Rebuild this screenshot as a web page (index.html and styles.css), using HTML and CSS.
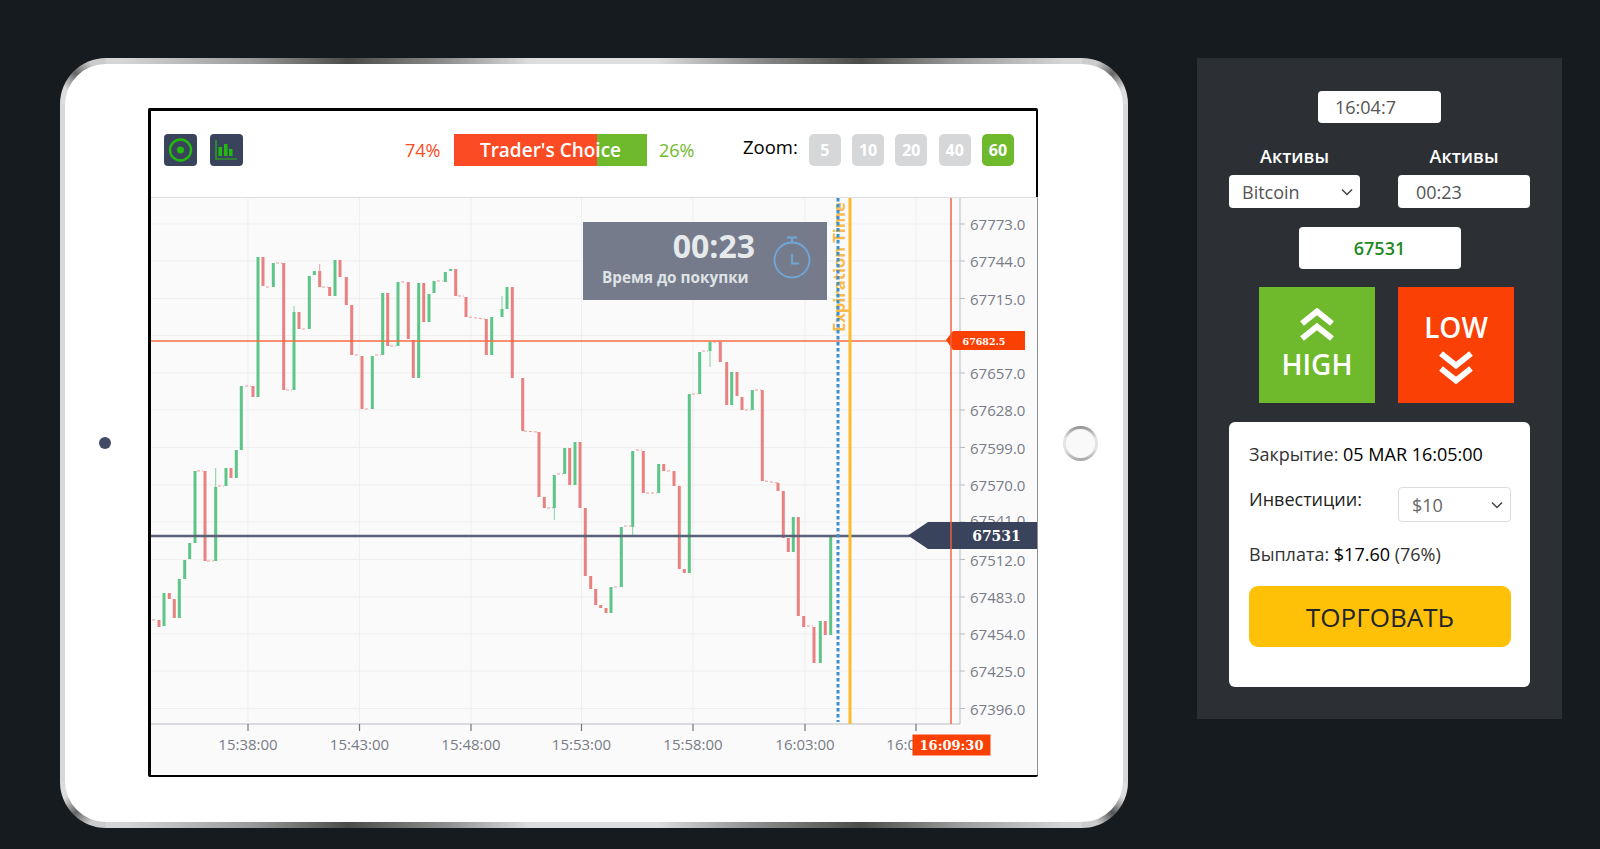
FILE: index.html
```html
<!DOCTYPE html>
<html>
  <head>
    <title>Trading terminal</title>
    <meta charset="utf-8" />
    <link rel="stylesheet" href="styles.css">
  </head>
  <body>
    <div class="page">
      <div class="tablet">
        <div class="tablet-face">
          <span class="camera"></span>
          <div class="screen">
            <div class="chart-header">
              <span class="tool-icon">
                <svg width="33" height="32" viewBox="0 0 33 32">
                  <circle class="icon-line" cx="16.5" cy="16" r="10.5" stroke-width="2.4" />
                  <circle class="icon-fill" cx="16.5" cy="16" r="3.5" />
                </svg>
              </span>
              <span class="tool-icon tool-icon-second">
                <svg width="33" height="32" viewBox="0 0 33 32">
                  <path class="icon-line" d="M6 6V25H27" stroke-width="1.2" />
                  <path class="icon-fill" d="M8.500 13h3.500v9h-3.500zM14 10h3.500v12h-3.500zM19 15h3.500v7h-3.500z" />
                </svg>
              </span>
              <span class="percent percent-down">74%</span>
              <div class="choice-bar">Trader's Choice</div>
              <span class="percent percent-up">26%</span>
              <span class="zoom-label">Zoom:</span>
              <div class="zoom-buttons">
                <button class="zoom-button">5</button>
                <button class="zoom-button">10</button>
                <button class="zoom-button">20</button>
                <button class="zoom-button">40</button>
                <button class="zoom-button active">60</button>
              </div>
            </div>
            <div class="chart">
              <svg class="chart-svg" width="886" height="577" viewBox="151 198 886 577">
                <path class="grid" d="M151 224H960M151 261H960M151 298.500H960M151 335.500H960M151 373H960M151 410H960M151 447.500H960M151 485H960M151 522H960M151 559.500H960M151 597H960M151 634H960M151 671H960M151 708.500H960" />
                <path class="grid" d="M248 198V724M359.500 198V724M471 198V724M581.500 198V724M693 198V724M805 198V724M916 198V724" />
                <path class="axis" d="M960 198V724H151" />
                <path class="axis" d="M960 224H965M960 261H965M960 298.500H965M960 335.500H965M960 373H965M960 410H965M960 447.500H965M960 485H965M960 522H965M960 559.500H965M960 597H965M960 634H965M960 671H965M960 708.500H965" />
                <path class="axis-tick" d="M248 724V731M359.500 724V731M471 724V731M581.500 724V731M693 724V731M805 724V731M916 724V731" />

                <g class="price-labels">
                  <text x="970" y="230">67773.0</text>
                  <text x="970" y="267">67744.0</text>
                  <text x="970" y="304.500">67715.0</text>
                  <text x="970" y="341.500">67686.0</text>
                  <text x="970" y="379">67657.0</text>
                  <text x="970" y="416">67628.0</text>
                  <text x="970" y="453.500">67599.0</text>
                  <text x="970" y="491">67570.0</text>
                  <text x="970" y="526">67541.0</text>
                  <text x="970" y="565.500">67512.0</text>
                  <text x="970" y="603">67483.0</text>
                  <text x="970" y="640">67454.0</text>
                  <text x="970" y="677">67425.0</text>
                  <text x="970" y="714.500">67396.0</text>
                </g>
                <g class="time-labels">
                  <text x="248" y="750">15:38:00</text>
                  <text x="359.500" y="750">15:43:00</text>
                  <text x="471" y="750">15:48:00</text>
                  <text x="581.500" y="750">15:53:00</text>
                  <text x="693" y="750">15:58:00</text>
                  <text x="805" y="750">16:03:00</text>
                  <text x="916" y="750">16:08:00</text>
                </g>

                <!-- candles -->
                <path class="doji-red" d="M152 620H156M197 471H203M207 561H214M218 486H224M245 386H251M266 287H271M276 263H282M286 390H292M302 329H307M322 287H328M355 355H360M365 409H370M375 355H381M390 346H396M401 282H406M437 281H443M458 296H464M469 317L485 319M524 431L537 432M547 508H553M557 474H563M614 587H619.500M624 526H631M636 450H642M646 493H657M667 471H672M692 394H698M702 351H708M713 342H719M745 410H751M755 390H761M765 481L778 483M807 626H813" />
                <path class="wick-green" d="M215.700 468V487M294 306V312M502 296V309M554.300 508V520M632.700 527V536M710 351V367" />
                <path class="wick-red" d="M319.700 264V271" />
                <path class="body-green" d="M164 593V626M179.300 579V618M184.700 560V579M189.700 543V559M195 471V543M215.700 487V561M226 468V486M236.300 450V478M241.300 386V450M258 257V397M273.300 263V287M294 312V390M309.300 276V329M314.300 271V275M335 260V296M372.300 356V409M382.700 293V355M398 282V346M418.700 283V378M429 294V322M434 281V293M445.300 272V282M450.700 269V271M491.700 317V355M502 309V317M507 287V309M554.300 475V508M564.700 448V474M575 442V485M611 587V613M621.300 527V587M632.700 451V527M658.700 464V493M689.300 394V573M699.700 352V394M710 342V351M731.700 372V405M752.300 390V410M793.300 517V552M820.300 621V663M830.700 536V635" />
                <path class="body-red" d="M159 620V627M169.300 593V599M174.300 599V618M205 471V561M231 468V478M253 386V397M263 257V286M283.700 263V390M299 312V329M319.700 271V287M329.700 287V296M340 260V277M346.300 277V305M351.700 305V355M362 356V409M387.700 293V346M408.300 282V339M413.300 340V378M423.700 283V322M455.700 269V296M466 297V317M486.300 319V355M512.300 287V378M522.700 378V431M539 432V497M544.300 497V508M569.700 448V485M580 442V508M585.300 508V576M590.700 576V589M595.700 589V605M600.700 605V608M606 608V613M643.300 451V493M663.700 464V471M674 471V486M679.300 486V569M684.300 569V573M720.300 342V362M726.700 362V405M737 372V396M742 397V410M762.300 390V481M778 483V491M783.300 491V538M788.300 538V552M798.300 517V616M803.700 616V627M814 627V663M825.300 621V635" />

                <path class="line-open" d="M151 341H947" />
                <path class="line-price" d="M151 536H910" />
                <text class="expiry-text" transform="translate(845 332) rotate(-90)">Expiration Time</text>
                <path class="line-buy" d="M838 198V722" />
                <path class="line-expiry" d="M850 198V724" />

                <polygon class="tag-open" points="946,340 953,331 1025,331 1025,350 953,350" />
                <text class="tag-text tag-open-text" x="984" y="344.500">67682.5</text>
                <polygon class="tag-price" points="908,535.500 928,522 1037,522 1037,549 928,549" />
                <text class="tag-text tag-price-text" x="996.500" y="541">67531</text>
                <path class="line-close" d="M951 198V724" />
                <rect class="tag-time" x="912.500" y="734.500" width="78" height="21" />
                <text class="tag-text tag-time-text" x="951.500" y="749.500">16:09:30</text>
              </svg>

              <div class="timer">
                <div class="timer-text">
                  <div class="timer-value">00:23</div>
                  <div class="timer-label">Время до покупки</div>
                </div>
                <svg class="timer-icon" width="40" height="46" viewBox="0 0 40 46">
                  <circle cx="20" cy="26" r="17.500" />
                  <path d="M15 3.500H25M20 3.500V8.500M20 20V29.500H27" />
                </svg>
              </div>
            </div>
          </div>
          <span class="home-button"></span>
        </div>
      </div>

      <aside class="panel">
        <input class="field time-field" type="text" value="16:04:7" />
        <div class="field-row">
          <div class="field-col">
            <label class="field-label">Активы</label>
            <select class="field asset-select">
              <option>Bitcoin</option>
            </select>
          </div>
          <div class="field-col">
            <label class="field-label">Активы</label>
            <input class="field expiry-field" type="text" value="00:23" />
          </div>
        </div>
        <div class="field rate-field">67531</div>
        <div class="trade-buttons">
          <button class="trade-button high">
            <svg width="36" height="34" viewBox="0 0 36 34">
              <path d="M3 15.500L18 3.500L33 15.500M3 30.500L18 18.500L33 30.500" />
            </svg>
            <span>HIGH</span>
          </button>
          <button class="trade-button low">
            <span>LOW</span>
            <svg width="36" height="34" viewBox="0 0 36 34">
              <path d="M3 3.500L18 15.500L33 3.500M3 18.500L18 30.500L33 18.500" />
            </svg>
          </button>
        </div>
        <div class="order-card">
          <div class="order-line">Закрытие: <b>05 MAR 16:05:00</b></div>
          <div class="order-line order-invest">
            <span>Инвестиции:</span>
            <select class="invest-select">
              <option>$10</option>
            </select>
          </div>
          <div class="order-line order-payout">Выплата: <b>$17.60</b> (76%)</div>
          <button class="submit-button">ТОРГОВАТЬ</button>
        </div>
      </aside>
    </div>
  </body>
</html>
```

FILE: styles.css
```css
* {
  box-sizing: border-box;
}

body {
  margin: 0;
  background-color: #161b20;
  font-family: "Open Sans", Arial, sans-serif;
  overflow: hidden;
}

.page {
  display: flex;
  align-items: flex-start;
  padding: 58px 0 0 60px;
  height: 849px;
}

/* tablet frame */
.tablet {
  width: 1068px;
  height: 770px;
  padding: 6px 5px;
  border-radius: 46px;
  background:
    linear-gradient(45deg, #ddd 22%, #666 50%, #ccc 78%) 0 0 / 46px 46px no-repeat,
    linear-gradient(135deg, #ccc 22%, #666 50%, #ddd 78%) 100% 0 / 46px 46px no-repeat,
    linear-gradient(135deg, #ddd 22%, #666 50%, #ccc 78%) 0 100% / 46px 46px no-repeat,
    linear-gradient(45deg, #ccc 22%, #555 50%, #ddd 78%) 100% 100% / 46px 46px no-repeat,
    linear-gradient(90deg, #d8d8d8 0, #d5d5d5 6%, #9a9a9a 18%, #4a4a48 27%, #8d8d8d 36%, #dcdddc 44%, #dcdddc 56%, #8d8d8d 65%, #4a4a48 75%, #9a9a9a 84%, #d5d5d5 94%, #d8d8d8 100%);
}

.tablet-face {
  display: flex;
  align-items: center;
  height: 100%;
  padding-left: 34px;
  border-radius: 41px;
  background-color: #fff;
}

.camera {
  width: 12px;
  height: 12px;
  margin-right: 37px;
  border-radius: 50%;
  background-color: #414b64;
}

.home-button {
  width: 35px;
  height: 35px;
  margin-left: 25px;
  border-radius: 50%;
  border: 3px solid transparent;
  background:
    linear-gradient(#f9f9f9, #f9f9f9) padding-box,
    linear-gradient(#8f8f8f, #e4e4e4 35%, #e4e4e4 65%, #a5a5a5) border-box;
}

.screen {
  width: 890px;
  height: 669px;
  margin-bottom: 1px;
  border-left: 3px solid #000;
  border-top: 3px solid #000;
  border-bottom: 2px solid #000;
  border-radius: 2px;
  display: flex;
  flex-direction: column;
}

/* header over the chart */
.chart-header {
  display: flex;
  align-items: center;
  height: 86px;
  padding: 0 0 8px 13px;
  border-right: 2px solid #000;
  background-color: #fff;
}

.tool-icon {
  display: block;
  width: 33px;
  height: 32px;
  border-radius: 4px;
  background-color: #3a435c;
}

.tool-icon svg {
  display: block;
}

.tool-icon-second {
  margin-left: 13px;
}

.icon-line {
  fill: none;
  stroke: #23b90e;
}

.icon-fill {
  fill: #23b90e;
}

.percent {
  font-size: 18px;
  line-height: 32px;
}

.percent-down {
  margin-left: 162px;
  color: #fb4b24;
}

.percent-up {
  margin-left: 12px;
  color: #6fba2c;
}

.choice-bar {
  width: 193px;
  height: 32px;
  margin-left: 13.5px;
  background: linear-gradient(90deg, #fb4b24 74%, #6fba2c 74%);
  color: #fff;
  font-size: 19px;
  font-weight: 600;
  line-height: 32px;
  text-align: center;
}

.zoom-label {
  margin-left: 48.5px;
  margin-bottom: 8px;
  font-size: 18.5px;
  color: #000;
}

.zoom-buttons {
  display: flex;
  gap: 11.3px;
  margin-left: 11px;
}

.zoom-button {
  width: 32px;
  height: 32px;
  padding: 0;
  border: none;
  border-radius: 5px;
  background-color: #d5d7d9;
  color: #fff;
  font-family: "Open Sans", Arial, sans-serif;
  font-size: 16px;
  font-weight: 700;
}

.zoom-button.active {
  background-color: #6fba2c;
}

/* chart */
.chart {
  position: relative;
  flex: 1;
  border-top: 1px solid #ddd;
  border-right: 1px solid #8e9096;
  background-color: #fafafa;
}

.chart-svg {
  display: block;
}

.grid {
  fill: none;
  stroke: #efefef;
  stroke-width: 1;
}

.axis {
  fill: none;
  stroke: #b9bbc2;
  stroke-width: 1;
}

.axis-tick {
  fill: none;
  stroke: #6f7480;
  stroke-width: 1.2;
}

.price-labels text,
.time-labels text {
  fill: #787c87;
  font-size: 15px;
}

.time-labels text {
  text-anchor: middle;
}

.body-green,
.body-red {
  fill: none;
  stroke-width: 3;
}

.body-green {
  stroke: #5cc587;
}

.body-red {
  stroke: #e98181;
}

.wick-green,
.wick-red {
  fill: none;
  stroke-width: 1;
}

.wick-green {
  stroke: #82d2a3;
}

.wick-red {
  stroke: #eea0a0;
}

.doji-red {
  fill: none;
  stroke: #ee9d9d;
  stroke-width: 1;
  stroke-dasharray: 3 2;
}

.line-open {
  stroke: #fb6c42;
  stroke-width: 1.6;
}

.line-price {
  stroke: #5b6277;
  stroke-width: 2.4;
}

.line-close {
  stroke: #f4623a;
  stroke-width: 1.6;
  opacity: 0.9;
}

.line-buy {
  stroke: #3f8fd0;
  stroke-width: 3;
  stroke-dasharray: 3.5 2.5;
}

.line-expiry {
  stroke: #fdba2e;
  stroke-width: 3;
}

.expiry-text {
  fill: #f8bb4c;
  font-size: 16.5px;
  font-weight: 700;
}

.tag-open,
.tag-time {
  fill: #fb4003;
}

.tag-price {
  fill: #3a435c;
}

.tag-text {
  fill: #fff;
  font-family: "DejaVu Serif", serif;
  font-weight: 700;
  text-anchor: middle;
}

.tag-open-text {
  font-size: 9.5px;
}

.tag-price-text {
  font-size: 14px;
}

.tag-time-text {
  font-size: 13px;
}

.timer {
  position: absolute;
  left: 432px;
  top: 24px;
  display: flex;
  width: 244px;
  height: 78px;
  padding: 5px 0 0 19px;
  background-color: #757b8b;
}

.timer-text {
  width: 153px;
}

.timer-value {
  height: 38px;
  color: #e6eaec;
  font-size: 32px;
  font-weight: 700;
  line-height: 38px;
  text-align: right;
}

.timer-label {
  color: #dfe3e6;
  font-size: 15.3px;
  font-weight: 700;
  line-height: 24px;
  white-space: nowrap;
}

.timer-icon {
  margin: 7px 0 0 17px;
  fill: none;
  stroke: #6fa8d8;
  stroke-width: 1.8;
}

/* right panel */
.panel {
  display: flex;
  flex-direction: column;
  align-items: center;
  width: 365px;
  height: 661px;
  margin-left: 69px;
  padding-top: 33px;
  background-color: #2c3034;
}

.field {
  border: none;
  border-radius: 4px;
  background-color: #fff;
  color: #555;
  font-family: "Open Sans", Arial, sans-serif;
  font-size: 18px;
  outline: none;
}

.time-field {
  width: 123px;
  height: 32px;
  padding: 0 0 0 17px;
}

.field-row {
  display: flex;
  gap: 38px;
  width: 301px;
  margin-top: 21px;
}

.field-col {
  display: flex;
  flex-direction: column;
  align-items: center;
  flex: 1;
}

.field-label {
  margin-bottom: 7px;
  color: #fff;
  font-size: 18px;
  font-weight: 600;
  line-height: 24px;
}

.asset-select,
.invest-select {
  appearance: none;
  background-image: url("data:image/svg+xml,%3Csvg xmlns='http://www.w3.org/2000/svg' viewBox='0 0 12 8'%3E%3Cpath d='M1 1.500L6 6.500L11 1.500' fill='none' stroke='%23444' stroke-width='1.500'/%3E%3C/svg%3E");
  background-repeat: no-repeat;
  background-size: 12px 8px;
}

.asset-select {
  width: 131px;
  height: 33px;
  padding: 0 0 0 13px;
  background-position: right 7px center;
}

.expiry-field {
  width: 132px;
  height: 33px;
  padding: 0 0 0 18px;
}

.rate-field {
  width: 162px;
  height: 42px;
  margin-top: 19px;
  color: #1f8a1f;
  font-weight: 600;
  line-height: 42px;
  text-align: center;
}

.trade-buttons {
  display: flex;
  gap: 23px;
  width: 301px;
  margin-top: 18px;
  padding-left: 30px;
}

.trade-button {
  display: flex;
  flex-direction: column;
  align-items: center;
  width: 116px;
  height: 116px;
  padding: 0;
  border: none;
  color: #fff;
  font-family: "Open Sans", Arial, sans-serif;
  font-size: 28px;
  font-weight: 600;
  line-height: 38px;
}

.trade-button svg {
  fill: none;
  stroke: #fff;
  stroke-width: 6;
}

.trade-button.high {
  padding-top: 21px;
  background-color: #6fba2c;
}

.trade-button.high span {
  margin-top: 3px;
}

.trade-button.low {
  padding-top: 21px;
  background-color: #fa4005;
}

.trade-button.low svg {
  margin-top: 4px;
}

.order-card {
  width: 301px;
  height: 265px;
  margin-top: 19px;
  padding: 20px 19px 0 20px;
  border-radius: 6px;
  background-color: #fff;
  color: #333;
  font-size: 18px;
}

.order-line {
  line-height: 24px;
}

.order-line b {
  font-weight: 500;
  color: #000;
}

.order-invest {
  display: flex;
  justify-content: space-between;
  align-items: flex-start;
  margin-top: 21px;
  color: #222;
}

.invest-select {
  width: 113px;
  height: 35px;
  padding: 0 0 0 13px;
  border: 1px solid #ddd;
  border-radius: 4px;
  background-color: #fff;
  background-position: right 7px center;
  color: #666;
  font-family: "Open Sans", Arial, sans-serif;
  font-size: 18px;
  outline: none;
}

.order-payout {
  margin-top: 20px;
}

.submit-button {
  display: block;
  width: 100%;
  height: 61px;
  margin-top: 20px;
  border: none;
  border-radius: 9px;
  background-color: #ffc107;
  color: #212529;
  font-family: "Open Sans", Arial, sans-serif;
  font-size: 26px;
}
```
